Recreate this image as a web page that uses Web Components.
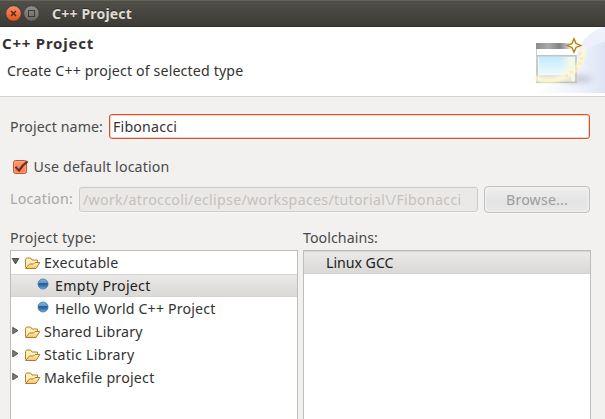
<!DOCTYPE html>
<html lang="en">
<head>
<meta charset="utf-8">
<title>C++ Project</title>
<style>
html,body{margin:0;height:100%;overflow:hidden;background:#f2f1f0}
body{font:14.2px/23px "Noto Sans","Open Sans",sans-serif;color:#3c3c3c}
</style>
</head>
<body>
<project-wizard></project-wizard>
<script>
const define = (name, html, init) => {
  const tpl = document.createElement('template');
  tpl.innerHTML = html;
  customElements.define(name, class extends HTMLElement {
    constructor() {
      super();
      this.attachShadow({mode: 'open'}).append(tpl.content.cloneNode(true));
    }
    connectedCallback() { if (init) init(this, this.shadowRoot); }
  });
};

/* A label whose letter spacing is adjusted so that it fills the width in "w". */
define('ui-text', `<style>
:host{display:block;white-space:pre;flex:none}
span{display:inline-block}
</style><span></span>`, (el, root) => {
  const s = root.querySelector('span');
  s.textContent = el.getAttribute('text');
  const want = +el.getAttribute('w');
  const have = s.getBoundingClientRect().width;
  s.style.letterSpacing = (want - have) / s.textContent.length + 'px';
  el.style.width = want + 'px';
});

define('title-bar', `<style>
:host{display:flex;align-items:center;box-sizing:border-box;height:27px;padding-left:5px;
background:linear-gradient(#65645b 0 1px,#504f48 1px,#3d3b37 26px,#33322e 26px);color:#dfdbd2}
svg{display:block;margin-right:1px}
ui-text{font-size:14px;font-weight:bold;margin:-1px 0 0 11px;text-shadow:0 -1px #2d2c29}
</style>
<svg width="35" height="19" viewBox="0 0 35 19">
<defs><linearGradient id="r" x2="0" y2="1"><stop stop-color="#f79069"/><stop offset="1" stop-color="#e3511b"/></linearGradient>
<linearGradient id="g" x2="0" y2="1"><stop stop-color="#92918a"/><stop offset="1" stop-color="#65645e"/></linearGradient></defs>
<circle cx="8.5" cy="9.5" r="7.8" fill="url(#r)" stroke="#35332f" stroke-width=".8"/>
<path d="M6 7l5 5M11 7l-5 5" stroke="#4a2517" stroke-width="1.3"/>
<circle cx="26.5" cy="9.5" r="7.8" fill="url(#g)" stroke="#35332f" stroke-width=".8"/>
<rect x="23.5" y="6.5" width="6" height="6" fill="none" stroke="#3b3a36"/>
</svg>
<ui-text text="C++ Project" w="80"></ui-text>`);

define('wizard-banner', `<style>
:host{display:flex;justify-content:space-between;box-sizing:border-box;height:70px;background:#fff;border-bottom:1px solid #d6d4d2}
.t{padding:5px 0 0 2px}
ui-text{color:#333}
.h{font-weight:bold;font-size:15px}
.d{margin:4px 0 0 5px}
svg{display:block}
</style>
<div class="t"><ui-text class="h" text="C++ Project" w="92"></ui-text><ui-text class="d" text="Create C++ project of selected type" w="236.3"></ui-text></div>
<svg width="75" height="66" viewBox="530 27 75 66">
<defs>
<linearGradient id="sw" gradientUnits="userSpaceOnUse" x1="535" y1="0" x2="605" y2="0"><stop stop-color="#fff"/><stop offset=".6" stop-color="#f0f3fb"/><stop offset="1" stop-color="#dce4f6"/></linearGradient>
<linearGradient id="bar"><stop stop-color="#8d8d8d"/><stop offset=".35" stop-color="#a9a9a9"/><stop offset=".65" stop-color="#828282"/><stop offset="1" stop-color="#e8e8e8"/></linearGradient>
<linearGradient id="sky" x2="0" y2="1"><stop stop-color="#c1eafc"/><stop offset="1" stop-color="#fff"/></linearGradient>
<linearGradient id="fade" x1="0" x2="1"><stop offset=".55" stop-color="#eaf6ee" stop-opacity="0"/><stop offset=".85" stop-color="#f2f7e8"/></linearGradient>
<linearGradient id="bd" x2="0" y2="1"><stop stop-color="#bac6cc"/><stop offset="1" stop-color="#c3c1b5"/></linearGradient>
<filter id="b" x="-30%" y="-30%" width="160%" height="160%"><feGaussianBlur stdDeviation="1.2"/></filter>
<filter id="b3" x="-50%" y="-100%" width="200%" height="300%"><feGaussianBlur stdDeviation="3"/></filter>
</defs>
<path d="M605 27C594 30 586 36 580 45C574 68 558 87 530 93H605Z" fill="url(#sw)"/>
<path d="M605 27C594 30 586 36 580 45L585 52C591 46 598 43 605 42Z" fill="#edf1fb"/>
<ellipse cx="578" cy="79" rx="14" ry="3.5" fill="#a4a4be" opacity=".6" filter="url(#b3)"/>
<path d="M536 43h41v38h-41z" fill="#fff"/>
<path d="M536 43h36v6h-36z" fill="url(#bar)"/>
<path d="M536.5 49v7" stroke="#ccc"/>
<rect x="537" y="55.8" width="39" height="26.5" fill="#f5f5ed" stroke="url(#bd)" stroke-width="1.7"/>
<rect x="539" y="57" width="29" height="23" fill="url(#sky)"/>
<rect x="539" y="57" width="36" height="23" fill="url(#fade)"/>
<path d="M539 75h32v6h-32z" fill="#e5e4db"/>
<path d="M583 48C587 66 562 88 534 78" fill="none" stroke="#fffad0" stroke-width="5.5" opacity=".8" filter="url(#b)"/>
<g stroke="#f8dba8" stroke-width=".9"><path d="M578.500 52l3 3m0-3l-3 3M580 57l3 3m0-3l-3 3M578.500 62l3 3m0-3l-3 3M575 67l3 3m0-3l-3 3M570 71l3 3m0-3l-3 3M565 74l3 3m0-3l-3 3"/></g>
<circle cx="574" cy="45" r="6" fill="#fff3b0" opacity=".6" filter="url(#b)"/>
<path d="M574 38.700l2 4.800 4.800 2-4.800 2-2 4.800-2-4.800-4.800-2 4.800-2z" fill="#fffce8" stroke="#a87a27" stroke-width="1.3"/>
</svg>`);

define('text-field', `<style>
:host{display:block;box-sizing:border-box;height:25px;flex:none;padding-left:3px;border-radius:3px;border:1px solid #d0552f;background:#fff;color:#333;
box-shadow:inset 0 0 0 1px #f9cfbf,0 1px #f9f8f7}
:host([disabled]){border-color:#cfcdcb;background:#ebe9e8;box-shadow:0 1px #f9f8f7,0 -1px #ecebea;color:#c5c0bb}
</style><slot></slot>`);

define('check-box', `<style>
:host{display:flex;align-items:flex-start}
svg{display:block;margin:3px 4.500px 0 0}
</style>
<svg width="17" height="17" viewBox="0 0 17 17"><defs><linearGradient id="o" x2="0" y2="1"><stop stop-color="#fa9a72"/><stop offset="1" stop-color="#f37b50"/></linearGradient></defs>
<rect x="1.5" y="2.5" width="13" height="13" rx="2" fill="url(#o)" stroke="#c9522c"/><rect x="2.5" y="3.5" width="11" height="11" rx="1" fill="none" stroke="#ffb090" opacity=".6"/>
<path d="M3.4 8.8L7 12.6Q10.5 6.8 15.6 3.3" fill="none" stroke="#65321f" stroke-width="2.1"/></svg>
<slot></slot>`);

define('push-button', `<style>
:host{display:flex;justify-content:center;box-sizing:border-box;width:106px;height:27px;line-height:25px;border:1px solid #c3c1bf;border-radius:4px;
background:linear-gradient(#f0efef,#e5e4e4 55%,#e8e7e7);box-shadow:inset 0 0 2px 1px #f3f2f2,0 1px #f9f8f7;color:#9c9c9c}
</style><slot></slot>`);

define('tree-item', `<style>
:host{display:flex;box-sizing:border-box;height:23px}
:host([selected]){background:linear-gradient(#d6d5d2 0 1px,#eae9e8 1px,#dad9d6 22px,#d4d3cf 22px);color:#222}
svg{display:block;flex:none}
#f,#d{display:none}
:host([kind=folder]) #f,:host([kind=dot]) #d{display:block}
:host([kind=plain]){padding-left:22px}
:host([open]) .c,:host(:not([open])) .o{display:none}
</style>
<svg id="f" width="33" height="23" viewBox="0 0 33 23"><defs><linearGradient id="y" x2="0" y2="1"><stop stop-color="#fff5c7"/><stop offset="1" stop-color="#f4c36a"/></linearGradient></defs>
<path class="o" d="M1.2 7.5h6.6L4.5 13z" fill="#666" stroke="#3a3a3a" stroke-width=".8"/>
<path class="c" d="M1.7 7.3v6.6L7 10.6z" fill="#777" stroke="#444" stroke-width=".8"/>
<path d="M14.5 16.5v-8l1-1.500h4l1.500 2h5.500v3" fill="#fff0b9" stroke="#b98228"/>
<path d="M14.6 17.5L18.5 13l4 0 1.5-1.5h4.800L25 17.500z" fill="url(#y)" stroke="#b77822" stroke-linejoin="round"/>
</svg>
<svg id="d" width="44" height="23" viewBox="0 0 44 23"><defs><linearGradient id="u" x2="0" y2="1"><stop stop-color="#8fb6d8"/><stop offset=".38" stop-color="#5f98c8"/><stop offset=".42" stop-color="#235f9c"/><stop offset=".65" stop-color="#2f70ae"/><stop offset="1" stop-color="#79aed8"/></linearGradient></defs>
<circle cx="32" cy="10" r="5" fill="url(#u)" stroke="#3d76a9" stroke-width=".8"/></svg>
<slot></slot>`);

define('list-pane', `<style>
:host{display:flex;flex-direction:column;flex:none}
div{flex:1;box-sizing:border-box;border:1px solid #bfbdbb;border-bottom:0;background:#fff;color:#333}
</style><slot name="label"></slot><div><slot></slot></div>`);

define('project-wizard', `<style>
:host{display:flex;flex-direction:column;height:419px;width:605px;overflow:hidden}
main{flex:1;display:flex;flex-direction:column;padding:17px 15px 0 10px;color:#4a4a4a}
.row{display:flex}
.n{line-height:26px}
text-field{line-height:23px}
check-box{margin:15px 0 0 2px}
.loc{margin-top:8px}
.loc text-field{margin:1px 6px 0 6px}
.panes{flex:1;display:flex;gap:5px;margin-top:13px}
.p{padding:0 0 1px 0}
</style>
<title-bar></title-bar>
<wizard-banner></wizard-banner>
<main>
<div class="row"><ui-text class="n" text="Project name:" w="93"></ui-text><text-field style="margin-left:6px;width:481px"><ui-text text="Fibonacci" w="64"></ui-text></text-field></div>
<check-box><ui-text text="Use default location" w="136"></ui-text></check-box>
<div class="row loc"><ui-text class="n" style="color:#a9a6a3" text="Location:" w="63"></ui-text><text-field disabled style="width:399px"><ui-text text="/work/atroccoli/eclipse/workspaces/tutorial\\/Fibonacci" w="378.5"></ui-text></text-field><push-button><ui-text text="Browse..." w="62"></ui-text></push-button></div>
<div class="panes">
<list-pane style="width:288px"><ui-text slot="label" class="p" text="Project type:" w="86"></ui-text>
<tree-item kind="folder" open><ui-text text="Executable" w="74.5"></ui-text></tree-item>
<tree-item kind="dot" selected><ui-text text="Empty Project" w="95.5"></ui-text></tree-item>
<tree-item kind="dot"><ui-text text="Hello World C++ Project" w="160.5"></ui-text></tree-item>
<tree-item kind="folder"><ui-text text="Shared Library" w="98.5"></ui-text></tree-item>
<tree-item kind="folder"><ui-text text="Static Library" w="90.5"></ui-text></tree-item>
<tree-item kind="folder"><ui-text text="Makefile project" w="110.5"></ui-text></tree-item>
</list-pane>
<list-pane style="width:288px"><ui-text slot="label" class="p" text="Toolchains:" w="75"></ui-text>
<tree-item kind="plain" selected><ui-text text="Linux GCC" w="67.5"></ui-text></tree-item>
</list-pane>
</div>
</main>`);
</script>
</body>
</html>
